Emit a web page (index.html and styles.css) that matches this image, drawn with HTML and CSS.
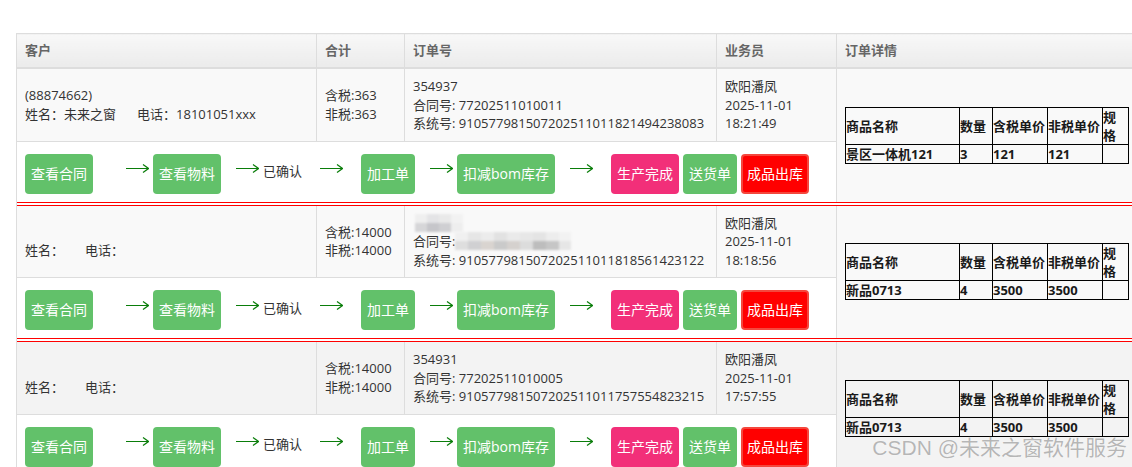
FILE: index.html
```html
<!DOCTYPE html>
<html lang="zh-CN">
<head>
    <meta charset="UTF-8">
    <meta name="viewport" content="width=device-width, initial-scale=1.0">
    <title>订单列表</title>
    <link rel="stylesheet" href="styles.css">
</head>
<body>
<div class="page">
    <table class="orders">
        <colgroup>
            <col class="c-cust"><col class="c-sum"><col class="c-no"><col class="c-sales"><col class="c-detail">
        </colgroup>
        <thead>
            <tr><th>客户</th><th>合计</th><th>订单号</th><th>业务员</th><th>订单详情</th></tr>
        </thead>
        <tbody>
            <!-- 订单 1 -->
            <tr class="main">
                <td>(88874662)<br>姓名：未来之窗<span class="tel">电话：18101051xxx</span></td>
                <td>含税:363<br>非税:363</td>
                <td>354937<br>合同号: 77202511010011<br>系统号: 910577981507202511011821494238083</td>
                <td>欧阳潘凤<br>2025-11-01<br>18:21:49</td>
                <td class="detail" rowspan="2">
                    <table class="items">
                        <colgroup><col class="i-name"><col class="i-qty"><col class="i-price"><col class="i-price"><col class="i-spec"></colgroup>
                        <tr><th>商品名称</th><th>数量</th><th>含税单价</th><th>非税单价</th><th>规格</th></tr>
                        <tr><td>景区一体机121</td><td>3</td><td>121</td><td>121</td><td></td></tr>
                    </table>
                </td>
            </tr>
            <tr class="act">
                <td colspan="4">
                    <div class="flow">
                        <a class="btn">查看合同</a>
                        <svg class="arr lead" viewBox="0 0 23 9"><path d="M0 4.5H22.5M17 .5L22.5 4.5L17 8.5"/></svg>
                        <a class="btn">查看物料</a>
                        <svg class="arr" viewBox="0 0 23 9"><path d="M0 4.5H22.5M17 .5L22.5 4.5L17 8.5"/></svg>
                        <span class="state">已确认</span>
                        <svg class="arr wide" viewBox="0 0 23 9"><path d="M0 4.5H22.5M17 .5L22.5 4.5L17 8.5"/></svg>
                        <a class="btn push">加工单</a>
                        <svg class="arr" viewBox="0 0 23 9"><path d="M0 4.5H22.5M17 .5L22.5 4.5L17 8.5"/></svg>
                        <a class="btn">扣减bom库存</a>
                        <svg class="arr" viewBox="0 0 23 9"><path d="M0 4.5H22.5M17 .5L22.5 4.5L17 8.5"/></svg>
                        <a class="btn pink push">生产完成</a>
                        <a class="btn">送货单</a>
                        <a class="btn red">成品出库</a>
                    </div>
                </td>
            </tr>
            <tr class="sep"><td colspan="5"></td></tr>

            <!-- 订单 2 -->
            <tr class="main">
                <td>&nbsp;<br>姓名：<span class="tel">电话：</span></td>
                <td>含税:14000<br>非税:14000</td>
                <td><span class="mosaic m1"></span><br>合同号:<span class="mosaic m2"></span><br>系统号: 910577981507202511011818561423122</td>
                <td>欧阳潘凤<br>2025-11-01<br>18:18:56</td>
                <td class="detail" rowspan="2">
                    <table class="items">
                        <colgroup><col class="i-name"><col class="i-qty"><col class="i-price"><col class="i-price"><col class="i-spec"></colgroup>
                        <tr><th>商品名称</th><th>数量</th><th>含税单价</th><th>非税单价</th><th>规格</th></tr>
                        <tr><td>新品0713</td><td>4</td><td>3500</td><td>3500</td><td></td></tr>
                    </table>
                </td>
            </tr>
            <tr class="act">
                <td colspan="4">
                    <div class="flow">
                        <a class="btn">查看合同</a>
                        <svg class="arr lead" viewBox="0 0 23 9"><path d="M0 4.5H22.5M17 .5L22.5 4.5L17 8.5"/></svg>
                        <a class="btn">查看物料</a>
                        <svg class="arr" viewBox="0 0 23 9"><path d="M0 4.5H22.5M17 .5L22.5 4.5L17 8.5"/></svg>
                        <span class="state">已确认</span>
                        <svg class="arr wide" viewBox="0 0 23 9"><path d="M0 4.5H22.5M17 .5L22.5 4.5L17 8.5"/></svg>
                        <a class="btn push">加工单</a>
                        <svg class="arr" viewBox="0 0 23 9"><path d="M0 4.5H22.5M17 .5L22.5 4.5L17 8.5"/></svg>
                        <a class="btn">扣减bom库存</a>
                        <svg class="arr" viewBox="0 0 23 9"><path d="M0 4.5H22.5M17 .5L22.5 4.5L17 8.5"/></svg>
                        <a class="btn pink push">生产完成</a>
                        <a class="btn">送货单</a>
                        <a class="btn red">成品出库</a>
                    </div>
                </td>
            </tr>
            <tr class="sep"><td colspan="5"></td></tr>

            <!-- 订单 3 -->
            <tr class="main dark">
                <td>&nbsp;<br>姓名：<span class="tel">电话：</span></td>
                <td>含税:14000<br>非税:14000</td>
                <td>354931<br>合同号: 77202511010005<br>系统号: 910577981507202511011757554823215</td>
                <td>欧阳潘凤<br>2025-11-01<br>17:57:55</td>
                <td class="detail" rowspan="2">
                    <table class="items">
                        <colgroup><col class="i-name"><col class="i-qty"><col class="i-price"><col class="i-price"><col class="i-spec"></colgroup>
                        <tr><th>商品名称</th><th>数量</th><th>含税单价</th><th>非税单价</th><th>规格</th></tr>
                        <tr><td>新品0713</td><td>4</td><td>3500</td><td>3500</td><td></td></tr>
                    </table>
                </td>
            </tr>
            <tr class="act">
                <td colspan="4">
                    <div class="flow">
                        <a class="btn">查看合同</a>
                        <svg class="arr lead" viewBox="0 0 23 9"><path d="M0 4.5H22.5M17 .5L22.5 4.5L17 8.5"/></svg>
                        <a class="btn">查看物料</a>
                        <svg class="arr" viewBox="0 0 23 9"><path d="M0 4.5H22.5M17 .5L22.5 4.5L17 8.5"/></svg>
                        <span class="state">已确认</span>
                        <svg class="arr wide" viewBox="0 0 23 9"><path d="M0 4.5H22.5M17 .5L22.5 4.5L17 8.5"/></svg>
                        <a class="btn push">加工单</a>
                        <svg class="arr" viewBox="0 0 23 9"><path d="M0 4.5H22.5M17 .5L22.5 4.5L17 8.5"/></svg>
                        <a class="btn">扣减bom库存</a>
                        <svg class="arr" viewBox="0 0 23 9"><path d="M0 4.5H22.5M17 .5L22.5 4.5L17 8.5"/></svg>
                        <a class="btn pink push">生产完成</a>
                        <a class="btn">送货单</a>
                        <a class="btn red">成品出库</a>
                    </div>
                </td>
            </tr>
        </tbody>
    </table>

    <div class="watermark">CSDN @未来之窗软件服务</div>
</div>
</body>
</html>
```

FILE: styles.css
```css
html, body {
    margin: 0;
    overflow: hidden;
    background: #fff;
}
body {
    font-family: "Open Sans", "Noto Sans CJK SC", sans-serif;
    font-size: 13px;
    color: #333;
}
.page {
    position: relative;
    height: 467px;
    box-sizing: border-box;
    padding: 33px 0 0 16px;
}

/* 订单表 */
.orders {
    border-collapse: collapse;
    table-layout: fixed;
    width: 1125px;
    border: 1px solid #ddd;
}
.c-cust { width: 300px; }
.c-sum { width: 88px; }
.c-no { width: 312px; }
.c-sales { width: 120px; }
.orders > thead > tr > th {
    text-align: left;
    padding: 8px;
    line-height: 17px;
    font-weight: bold;
    color: #666;
    background: linear-gradient(#f8f8f8, #ebebeb);
    border: 1px solid #ddd;
    border-bottom: 2px solid #ddd;
}
.orders > tbody > tr > td {
    border: 1px solid #ddd;
    padding: 8px;
    line-height: 18.5px;
    vertical-align: middle;
    white-space: nowrap;
}
.main > td {
    background: #f9f9f9;
}
.main.dark > td {
    background: #f3f3f3;
}
.sep + .main > td {
    border-top: 0 !important;
}
.orders > tbody > .act > td {
    background: #fff;
    padding: 12px 8px 8px;
    border-bottom: 0;
}
.orders > tbody > tr > td.detail {
    border-bottom: 0;
}
.orders > tbody > .sep > td {
    padding: 0;
    height: 4px;
    border: 0;
    background: linear-gradient(#f00 0 1px, #fff 1px 3px, #f00 3px 4px);
}
.tel {
    margin-left: 21px;
}

/* 打码 */
.mosaic {
    display: inline-block;
    vertical-align: -4px;
    height: 18px;
    filter: blur(1px);
}
.m1 {
    width: 48px;
    margin-left: 2px;
    background:
        linear-gradient(to right, #efefef 0 12px, #e4e4e6 12px 24px, #e9e9e9 24px 36px, #f2f2f2 36px) top / 100% 50% no-repeat,
        linear-gradient(to right, #d6d6d8 0 12px, #c6c6ca 12px 24px, #cfcfd2 24px 36px, #eeeeee 36px) bottom / 100% 50% no-repeat;
}
.m2 {
    width: 116px;
    background:
        linear-gradient(to right, #f0f0f0 0 13px, #e6e6e6 13px 26px, #ececec 26px 39px, #e2e2e2 39px 52px, #eaeaea 52px 65px, #e7e7e7 65px 78px, #e4e4e4 78px 91px, #ededed 91px 104px, #f2f2f2 104px) top / 100% 50% no-repeat,
        linear-gradient(to right, #dedede 0 13px, #d0d0d2 13px 26px, #d9d4d0 26px 39px, #cacaca 39px 52px, #d5d1ce 52px 65px, #dcdcdc 65px 78px, #bdbdbd 78px 91px, #c6c6c6 91px 104px, #e6e6e6 104px) bottom / 100% 50% no-repeat;
}

/* 订单详情 */
.detail {
    vertical-align: middle;
}
.items {
    border-collapse: collapse;
    table-layout: fixed;
    width: 284px;
    color: #1a1a1a;
}
.i-name { width: 114px; }
.i-qty { width: 33px; }
.i-price { width: 55px; }
.i-spec { width: 26px; }
.items th, .items td {
    border: 1px solid #000;
    padding: 0;
    line-height: 18px;
    text-align: left;
    font-weight: bold;
    white-space: normal;
}

/* 流程按钮 */
.flow {
    display: flex;
    align-items: center;
    gap: 4px;
}
.btn {
    display: inline-block;
    padding: 10px 6px;
    line-height: 20px;
    font-size: 14px;
    color: #fff;
    background: #62c16a;
    border-radius: 4px;
    text-decoration: none;
    cursor: pointer;
}
.btn.pink {
    background: #f22f79;
}
.btn.red {
    background: #f00;
    border: 2px solid #f4473d;
    padding: 8px 4px;
}
.push {
    margin-left: 14px;
}
.arr {
    width: 23px;
    height: 9px;
    margin: 0 0 10px 11px;
    fill: none;
    stroke: #0a7d0a;
    stroke-width: 1.2;
}
.arr.lead {
    margin-left: 29px;
}
.arr.wide {
    margin-left: 14px;
}
.state {
    margin-bottom: 4px;
    color: #333;
}

.watermark {
    position: absolute;
    right: 5px;
    bottom: 7px;
    font-family: "Liberation Sans", "Noto Sans CJK SC", sans-serif;
    font-size: 21px;
    line-height: 24px;
    color: rgba(150, 150, 150, 0.7);
    text-shadow: 0 0 1px #fff;
    white-space: nowrap;
}
```
